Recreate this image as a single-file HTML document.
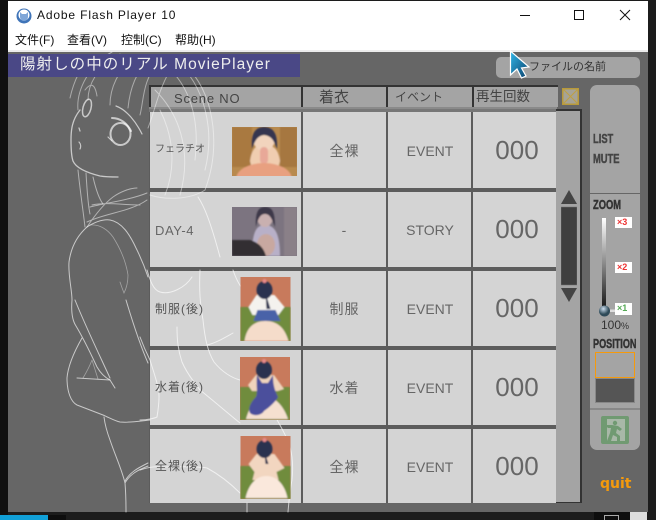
<!DOCTYPE html>
<html><head><meta charset="utf-8"><style>
html,body{margin:0;padding:0;background:#121212;width:656px;height:520px;overflow:hidden}
#r{position:relative;width:656px;height:520px;overflow:hidden;font-family:"Liberation Sans","Noto Sans CJK JP",sans-serif}
#r div,#r svg{position:absolute}
.t{white-space:nowrap;line-height:1}
.hd{background:#a4a4a4;top:85px;height:20px;border-top:2px solid #333;border-left:2px solid #333;box-sizing:content-box}
.c{background:#d4d4d4}
.n{font-size:12px;color:#555;left:155px;letter-spacing:1px}
.w{font-size:14px;color:#666;width:85px;left:302px;text-align:center;letter-spacing:1px}
.e{font-size:14px;color:#666;width:84px;left:388px;text-align:center}
.z{font-size:26px;color:#666;width:84px;left:475px;text-align:center}
.b{font-weight:bold;color:#444;transform-origin:0 0;transform:scaleX(.72);-webkit-text-stroke:.45px currentColor}
</style></head><body><div id="r">
<div style="left:0;top:0;width:656px;height:520px;background:#1c1c1c"></div>
<div style="left:0;top:0;width:8px;height:520px;background:#101010"></div>
<div style="left:8px;top:1px;width:640px;height:49px;background:#fff"></div>
<div style="left:8px;top:50px;width:640px;height:2px;background:#ececec"></div>
<div style="left:8px;top:52px;width:640px;height:460px;background:#666"></div>

<svg style="left:15px;top:7px" width="18" height="18" viewBox="0 0 18 18"><circle cx="9" cy="9" r="7.5" fill="#3f74b8"/><circle cx="9" cy="8" r="5.5" fill="#fff"/><path d="M5 5l2 2h4l2-2v5a4 4 0 0 1-8 0z" fill="#7fa6d8"/></svg>
<div class="t" style="left:37px;top:9px;font-size:12px;letter-spacing:.85px;color:#111">Adobe Flash Player 10</div>
<div class="t" style="left:15px;top:34px;font-size:12px;color:#111;font-family:'Liberation Sans','Noto Sans CJK SC',sans-serif">文件(F)</div>
<div class="t" style="left:67px;top:34px;font-size:12px;color:#111;font-family:'Liberation Sans','Noto Sans CJK SC',sans-serif">查看(V)</div>
<div class="t" style="left:121px;top:34px;font-size:12px;color:#111;font-family:'Liberation Sans','Noto Sans CJK SC',sans-serif">控制(C)</div>
<div class="t" style="left:175px;top:34px;font-size:12px;color:#111;font-family:'Liberation Sans','Noto Sans CJK SC',sans-serif">帮助(H)</div>
<svg style="left:520px;top:6px" width="120" height="20" viewBox="0 0 120 20" fill="none" stroke="#111" stroke-width="1"><path d="M0 9.5h10"/><path d="M54.5 4.500h9v9h-9z"/><path d="M100 4l10 10M110 4l-10 10"/></svg>

<!-- table cells -->
<div style="left:149px;top:85px;width:408px;height:418px;background:#5c5c5c"></div>
<div class="hd" style="left:149px;width:150px"></div>
<div class="hd" style="left:301px;width:83px"></div>
<div class="hd" style="left:386px;width:84px"></div>
<div class="hd" style="left:472px;width:84px"></div>
<div style="left:149px;top:107px;width:408px;height:2px;background:#8a8a8a"></div>
<div style="left:149px;top:109px;width:408px;height:3px;background:#777"></div>

<div class="c" style="left:150px;top:112px;width:151px;height:76px"></div><div class="c" style="left:303px;top:112px;width:83px;height:76px"></div><div class="c" style="left:388px;top:112px;width:83px;height:76px"></div><div class="c" style="left:473px;top:112px;width:83px;height:76px"></div>
<div class="c" style="left:150px;top:192px;width:151px;height:75px"></div><div class="c" style="left:303px;top:192px;width:83px;height:75px"></div><div class="c" style="left:388px;top:192px;width:83px;height:75px"></div><div class="c" style="left:473px;top:192px;width:83px;height:75px"></div>
<div class="c" style="left:150px;top:271px;width:151px;height:75px"></div><div class="c" style="left:303px;top:271px;width:83px;height:75px"></div><div class="c" style="left:388px;top:271px;width:83px;height:75px"></div><div class="c" style="left:473px;top:271px;width:83px;height:75px"></div>
<div class="c" style="left:150px;top:350px;width:151px;height:75px"></div><div class="c" style="left:303px;top:350px;width:83px;height:75px"></div><div class="c" style="left:388px;top:350px;width:83px;height:75px"></div><div class="c" style="left:473px;top:350px;width:83px;height:75px"></div>
<div class="c" style="left:150px;top:429px;width:151px;height:74px"></div><div class="c" style="left:303px;top:429px;width:83px;height:74px"></div><div class="c" style="left:388px;top:429px;width:83px;height:74px"></div><div class="c" style="left:473px;top:429px;width:83px;height:74px"></div>

<!-- line art -->
<svg style="left:0;top:0" width="656" height="520" viewBox="0 0 656 520" fill="none" stroke="#fff" stroke-linecap="round" stroke-opacity=".65">
<path stroke-width="1.300" d="M80 110C72 120 71 130 71 140C71 150 72 158 73 161C76 168 88 173 100 176C106 177 112 177 118 177"/>
<ellipse cx="87" cy="108" rx="4" ry="9" transform="rotate(15 87 108)" stroke-width="1.500"/>
<ellipse cx="120.500" cy="134" rx="10" ry="11" stroke-width="2"/>
<path stroke-width="2" d="M112 118C120 118 127 123 131 131"/>
<path stroke-width="1.200" d="M116 106C127 110 136 122 142 134M79 128l1 3M79 142c2 2 2 5 1 7M108 137l4 4"/>
<path stroke-width="1" stroke-opacity=".45" d="M70 98C74 80 82 65 92 55M78 110C76 90 90 64 112 52M88 100C88 85 96 68 120 54M110 105C110 88 118 70 135 56M128 108C130 88 136 72 150 58M140 115C144 100 142 80 160 60M148 128C156 108 158 88 175 62M85 90c6-8 10-6 12 6M165 65C190 85 200 120 195 160M175 60C205 85 215 130 205 170M190 70C216 100 220 150 205 190C190 200 165 200 150 195M155 90C185 120 190 160 180 195M160 110C175 140 175 170 165 195"/>
<path stroke-width="1" stroke-opacity=".5" d="M78 170C80 190 83 210 85 227M86 173C87 190 88 205 90 214M93 177C96 190 100 200 103 204"/>
<path stroke-width="1" stroke-opacity=".5" d="M87 227C95 215 105 203 113 197C120 192 130 188 137 188M90 207C105 203 130 200 147 193M87 222C105 213 130 212 147 200M92 205C105 202 125 205 140 205"/>
<path stroke-width="1" d="M87 227C78 235 71 247 69 262C68 275 72 290 72 300C71 312 72 320 76 326C82 336 90 352 97 367C101 374 106 378 110 380L115 388M75 300C85 325 98 352 110 378M82 338C74 352 68 366 67 378C67 392 71 402 77 405C85 408 95 412 103 415C110 418 115 421 120 422C130 423 140 421 150 420"/>
<path stroke-width="1" d="M77 378L110 380"/><path stroke-width=".8" stroke-opacity=".4" d="M92 360C89 368 86 373 83 378M92 360L98 379"/>
<path stroke-width="1" d="M104 417C105 425 107 432 110 440C115 455 122 470 125 483C126 495 126 505 126 512M125 483C130 474 138 470 148 466M125 481C130 472 138 468 148 463"/>
<path stroke-width="1" d="M87 227C95 222 103 219 110 220C122 222 130 235 136 248C141 258 145 268 148 277"/>
<path stroke-width=".8" stroke-opacity=".4" d="M90 225C100 224 108 230 113 237C120 248 126 262 128 275C128 285 125 291 124 293C122 288 121 285 120 282"/>
<path stroke-width="1" d="M126 300C132 320 140 345 148 363"/>
<path stroke-width="1" d="M198 197C204 206 210 220 220 257M147 270C150 280 153 290 160 292C170 295 185 288 192 277M200 270C199 290 200 303 203 320C205 340 208 352 214 362C222 372 232 378 240 380C252 392 265 403 273 413C282 428 288 440 290 447C293 458 293 470 292 480C290 490 289 500 288 512M177 327C177 340 178 350 182 362C188 376 196 384 200 390C215 402 230 415 240 423M233 333C224 338 216 343 207 345M140 420C148 420 155 418 157 417C159 405 160 395 158 387C155 375 152 367 150 360C146 352 143 345 140 337M140 470C146 468 153 466 160 467C175 467 195 466 207 468C220 475 232 485 240 493M247 503v9M233 270C238 285 244 292 250 296"/>
</svg>

<!-- header text -->
<div class="t" style="left:174px;top:92px;font-size:13px;letter-spacing:.8px;color:#444">Scene NO</div>
<div class="t" style="left:319px;top:90px;font-size:15px;color:#444">着衣</div>
<div class="t" style="left:395px;top:91px;font-size:12px;color:#444">イベント</div>
<div class="t" style="left:476px;top:90px;font-size:13.500px;color:#444">再生回数</div>

<!-- rows -->
<div class="t n" style="left:155px;top:145px;font-size:10px;letter-spacing:0">フェラチオ</div>
<div class="t n" style="top:224px;font-size:13px;color:#666;letter-spacing:.6px">DAY-4</div>
<div class="t n" style="top:303px">制服(後)</div>
<div class="t n" style="top:381px">水着(後)</div>
<div class="t n" style="top:460px">全裸(後)</div>
<div class="t w" style="top:144px">全裸</div><div class="t w" style="top:223px">-</div><div class="t w" style="top:302px">制服</div><div class="t w" style="top:381px">水着</div><div class="t w" style="top:460px">全裸</div>
<div class="t e" style="top:144px">EVENT</div><div class="t e" style="top:223px">STORY</div><div class="t e" style="top:302px">EVENT</div><div class="t e" style="top:381px">EVENT</div><div class="t e" style="top:460px">EVENT</div>
<div class="t z" style="top:137px">000</div><div class="t z" style="top:216px">000</div><div class="t z" style="top:295px">000</div><div class="t z" style="top:374px">000</div><div class="t z" style="top:453px">000</div>

<!-- thumbnails -->
<svg style="left:232px;top:127px" width="65" height="49" viewBox="0 0 65 49"><defs><filter id="a"><feGaussianBlur stdDeviation=".8"/></filter></defs><rect width="65" height="49" fill="#b88a4e"/><g filter="url(#a)"><rect x="0" y="0" width="20" height="40" fill="#a9793f"/><rect x="48" y="0" width="17" height="40" fill="#a67740"/><path d="M18 34C20 20 25 18 32 18C40 18 46 20 48 34L46 42H20z" fill="#f0cdb0"/><ellipse cx="32" cy="12" rx="11" ry="12" fill="#f2d4bd"/><path d="M20 22C18 6 24 0 32 0C41 0 46 6 45 22C42 14 40 9 32 8C25 9 23 14 20 22z" fill="#343650"/><rect x="28" y="20" width="8" height="17" rx="4" fill="#e8a898"/><ellipse cx="32" cy="52" rx="28" ry="16" fill="#e8a080"/></g></svg>
<svg style="left:232px;top:207px" width="65" height="49" viewBox="0 0 65 49"><rect width="65" height="49" fill="#7c7480"/><g filter="url(#a)"><rect x="52" y="0" width="13" height="49" fill="#8a8088"/><path d="M20 49C20 25 24 18 33 18C42 18 48 25 48 49z" fill="#b8b0c8"/><ellipse cx="33" cy="10" rx="8" ry="10" fill="#c9b0b0"/><path d="M24 20C23 4 27 0 33 0C40 0 43 4 43 20C40 12 38 7 33 7C28 7 26 12 24 20z" fill="#3c3848"/><ellipse cx="34" cy="38" rx="9" ry="11" fill="#c8a8a0"/><path d="M0 33H18C28 36 32 42 34 49H0z" fill="#332f30"/></g></svg>
<svg style="left:240px;top:277px" width="51" height="64" viewBox="0 0 50 64"><rect width="50" height="64" fill="#c87a5c"/><g filter="url(#a)"><rect y="30" width="50" height="34" fill="#6f8c3c"/><path d="M8 30L16 18H34L44 30L38 38H12z" fill="#f4f2ee"/><path d="M13 44L17 33H35L40 44z" fill="#4a62a8"/><path d="M4 64C6 50 14 44 25 44C36 44 44 50 48 64z" fill="#f5dcca"/><ellipse cx="24" cy="13" rx="8" ry="9" fill="#2c3050"/><path d="M25 16L30 32H26z" fill="#2c3050"/><circle cx="24" cy="4" r="2" fill="#e88a8a"/></g></svg>
<svg style="left:240px;top:357px" width="50" height="63" viewBox="0 0 50 63"><rect width="50" height="63" fill="#c87a5c"/><g filter="url(#a)"><rect y="30" width="50" height="33" fill="#6f8c3c"/><path d="M8 28L16 18H34L44 32L38 34H12z" fill="#f0d4bc"/><path d="M6 62C10 48 16 40 26 40C36 40 44 50 48 62z" fill="#f5e0d0"/><path d="M17 18C16 30 18 35 16 40C10 46 8 52 10 56C14 60 22 58 24 54C30 50 36 44 38 40C34 32 33 26 33 18L28 26H22z" fill="#4b4f9c"/><ellipse cx="24" cy="13" rx="8" ry="9" fill="#2c3050"/><circle cx="24" cy="4" r="2" fill="#e88a8a"/></g></svg>
<svg style="left:240px;top:436px" width="51" height="63" viewBox="0 0 50 63"><rect width="50" height="63" fill="#c87a5c"/><g filter="url(#a)"><rect y="30" width="50" height="33" fill="#6f8c3c"/><path d="M8 28L16 18H34L44 32L36 36L38 44H12L14 36z" fill="#f2d6c0"/><path d="M5 62C8 48 16 40 26 40C36 40 44 48 47 62z" fill="#fae8dc"/><ellipse cx="24" cy="13" rx="8" ry="9" fill="#2c3050"/><path d="M24 16L28 28H25z" fill="#2c3050"/><circle cx="24" cy="4" r="2" fill="#e88a8a"/></g></svg>

<!-- title bar -->
<div style="left:8px;top:54px;width:292px;height:23px;background:#4a4886"></div>
<div class="t" style="left:20px;top:57px;font-size:15.500px;color:#eee;letter-spacing:1.050px">陽射しの中のリアル MoviePlayer</div>
<div style="left:496px;top:57px;width:144px;height:21px;background:#a4a4a4;border-radius:5px"></div>
<div class="t" style="left:529px;top:62px;font-size:11px;color:#333">ファイルの名前</div>

<!-- scrollbar -->
<div style="left:556px;top:109px;width:26px;height:394px;background:#333"></div>
<div style="left:556px;top:111px;width:24px;height:391px;background:#a4a4a4"></div>
<svg style="left:561px;top:190px" width="16" height="113" viewBox="0 0 16 113"><path d="M8 0L16 14H0z" fill="#444"/><rect y="17" width="16" height="78" fill="#3f3f3f" stroke="#777" stroke-width=".5"/><path d="M0 98H16L8 112z" fill="#444"/></svg>
<svg style="left:562px;top:88px" width="17" height="17" viewBox="0 0 17 17"><rect x=".75" y=".75" width="15.500" height="15.500" fill="#a6a396" stroke="#b89a3a" stroke-width="1.500"/><path d="M1 1L16 16M16 1L1 16" stroke="#c0a040" stroke-width="1"/></svg>

<!-- right panel -->
<div style="left:590px;top:85px;width:50px;height:365px;background:#a4a4a4;border-radius:7px"></div>
<div style="left:590px;top:193px;width:50px;height:1px;background:#666"></div>
<div style="left:590px;top:408px;width:50px;height:2px;background:#888"></div>
<div class="t b" style="left:593px;top:132px;font-size:13px">LIST</div>
<div class="t b" style="left:593px;top:152px;font-size:13px">MUTE</div>
<div class="t b" style="left:593px;top:198px;font-size:13px;color:#333">ZOOM</div>
<div style="left:602px;top:218px;width:4px;height:92px;background:linear-gradient(#fff,#111);"></div>
<div style="left:615px;top:217px;width:17px;height:11px;background:#fff"></div>
<div class="t" style="left:617px;top:218px;font-size:9px;font-weight:bold;color:#e33">×3</div>
<div style="left:615px;top:262px;width:17px;height:11px;background:#fff"></div>
<div class="t" style="left:617px;top:263px;font-size:9px;font-weight:bold;color:#e33">×2</div>
<div style="left:615px;top:303px;width:17px;height:12px;background:#fff"></div>
<div class="t" style="left:617px;top:304px;font-size:9px;font-weight:bold;color:#5a5">×1</div>
<svg style="left:598px;top:304px" width="18" height="14" viewBox="0 0 18 14"><defs><radialGradient id="k" cx=".4" cy=".3"><stop offset="0" stop-color="#cde"/><stop offset="1" stop-color="#2e4a58"/></radialGradient></defs><rect x="8" y="5.500" width="9" height="2.500" fill="#ddd"/><circle cx="6.500" cy="7" r="5.500" fill="url(#k)"/></svg>
<div class="t" style="left:601px;top:319px;font-size:12px;color:#333">100<span style="font-size:9px">%</span></div>
<div class="t b" style="left:593px;top:337px;font-size:13px;color:#333;transform:scaleX(.7)">POSITION</div>
<div style="left:595px;top:378px;width:40px;height:25px;background:#555;border:1px solid #888;box-sizing:border-box"></div>
<div style="left:595px;top:352px;width:40px;height:26px;background:#f59a0c"></div>
<div style="left:596px;top:353px;width:38px;height:24px;background:#a4a4a4"></div>
<svg style="left:601px;top:416px" width="28" height="28" viewBox="0 0 28 28"><rect width="28" height="28" rx="2" fill="#709a72"/><path d="M6 3H24V25H6z" fill="#a8b8a8"/><circle cx="14" cy="7" r="2.200" fill="#709a72"/><path d="M4 9L11 9L17 10L21 13L19 15L16 13L15 17L19 20V25H16V21L12 19L10 25H6L9 17L10 12L7 12z" fill="#709a72"/></svg>
<div class="t" style="left:600px;top:477px;font-size:14px;font-weight:bold;color:#f59a0c;font-family:'DejaVu Sans',sans-serif">quit</div>

<!-- cursor -->
<svg style="left:508px;top:49px" width="24" height="32" viewBox="0 0 24 32"><defs><linearGradient id="cg" x1="0" y1="0" x2="1" y2="1"><stop offset="0" stop-color="#2fb6e8"/><stop offset="1" stop-color="#0b3f6a"/></linearGradient></defs><path d="M2.500 2L2.500 26L9 20L13.500 29L18 27L13.500 19L21 18z" fill="url(#cg)" stroke="#fff" stroke-width="1.200"/></svg>

<!-- taskbar -->
<div style="left:0;top:515px;width:48px;height:5px;background:#10a0d8"></div>
<div style="left:48px;top:515px;width:18px;height:5px;background:#0e0e0e"></div>
<div style="left:594px;top:512px;width:36px;height:8px;background:#0e0e0e"></div>
<div style="left:604px;top:515px;width:15px;height:5px;border:1px solid #aaa;border-bottom:0;box-sizing:border-box"></div>
<div style="left:630px;top:512px;width:17px;height:8px;background:#ddd"></div>
</div></body></html>
